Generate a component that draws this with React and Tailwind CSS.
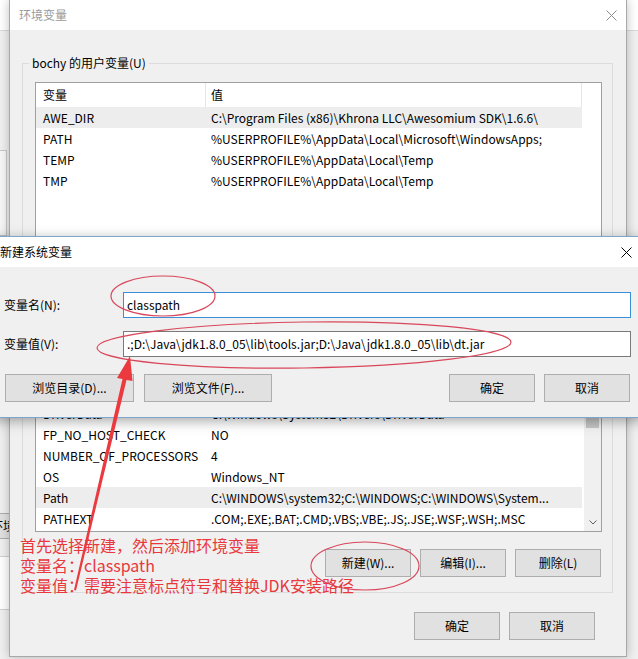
import React from "react";

const userVars = [
  ["AWE_DIR", "C:\\Program Files (x86)\\Khrona LLC\\Awesomium SDK\\1.6.6\\"],
  ["PATH", "%USERPROFILE%\\AppData\\Local\\Microsoft\\WindowsApps;"],
  ["TEMP", "%USERPROFILE%\\AppData\\Local\\Temp"],
  ["TMP", "%USERPROFILE%\\AppData\\Local\\Temp"],
];

const systemVars = [
  ["asl.log", "Destination=file"],
  ["ComSpec", "C:\\WINDOWS\\system32\\cmd.exe"],
  ["DriverData", "C:\\Windows\\System32\\Drivers\\DriverData"],
  ["FP_NO_HOST_CHECK", "NO"],
  ["NUMBER_OF_PROCESSORS", "4"],
  ["OS", "Windows_NT"],
  ["Path", "C:\\WINDOWS\\system32;C:\\WINDOWS;C:\\WINDOWS\\System..."],
  ["PATHEXT", ".COM;.EXE;.BAT;.CMD;.VBS;.VBE;.JS;.JSE;.WSF;.WSH;.MSC"],
];

function CloseIcon({ color }) {
  return (
    <svg width="11" height="11" viewBox="0 0 11 11">
      <path d="M0.5 0.5L10.5 10.5M10.5 0.5L0.5 10.5" stroke={color} strokeWidth="1" />
    </svg>
  );
}

function Btn({ children, className = "" }) {
  return (
    <div
      className={`flex items-center justify-center h-[28px] border border-[#adadad] bg-[#e1e1e1] text-[12px] text-black ${className}`}
    >
      {children}
    </div>
  );
}

function Row({ name, value, selected }) {
  return (
    <div className={`flex h-[21px] items-center w-[546px] ${selected ? "bg-[#ededed]" : ""}`}>
      <div className="w-[170px] pl-[7px] whitespace-nowrap overflow-hidden">{name}</div>
      <div className="w-[376px] pl-[5px] whitespace-nowrap overflow-hidden">{value}</div>
    </div>
  );
}

function Header() {
  return (
    <div className="flex h-[24px] items-center w-[546px]">
      <div className="w-[170px] h-full flex items-center pl-[7px] border-r border-[#e5e5e5]">变量</div>
      <div className="w-[376px] h-full flex items-center pl-[5px] border-r border-[#e5e5e5]">值</div>
    </div>
  );
}

function GroupBox({ label, className, children }) {
  return (
    <div className={`relative border border-[#dcdcdc] ${className}`}>
      <span className="absolute -top-[10px] left-[6px] px-[3px] bg-[#f0f0f0] text-[12px] leading-[18px] text-black">
        {label}
      </span>
      {children}
    </div>
  );
}

export default function App() {
  return (
    <div className="relative w-[638px] h-[659px] overflow-hidden bg-[#f0f0f0] font-['Noto_Sans_CJK_SC','Noto_Sans',sans-serif] text-[12px] text-black">
      {/* window behind */}
      <div className="h-[31px] bg-white border-b border-[#d9d9d9]"></div>
      <div className="absolute left-[-60px] top-[150px] w-[67px] h-[86px] border border-[#c8c8c8] bg-[#f7f7f7]"></div>
      <div className="absolute left-[-40px] top-[513px] w-[120px] h-[26px] border border-[#adadad] bg-[#e1e1e1] flex items-center pl-[30px]">
        环境变量(N)...
      </div>
      <div className="absolute left-[-60px] top-[556px] w-[80px] h-[54px] border border-[#d0d0d0] bg-white"></div>

      {/* 环境变量 dialog */}
      <div className="absolute left-[9px] top-0 w-[618px] h-[657px] flex flex-col bg-[#f0f0f0] border border-[#a8a8a8] border-t-0 shadow-[0_0_10px_rgba(0,0,0,0.25)]">
        <div className="h-[30px] shrink-0 bg-white flex items-center justify-between pl-[9px] pr-[9px]">
          <span className="text-[#9a9a9a]">环境变量</span>
          <CloseIcon color="#8a8a8a" />
        </div>

        <div className="flex flex-col pl-[12px]">
          <GroupBox label="bochy 的用户变量(U)" className="mt-[33px] w-[591px] h-[244px] pt-[18px] pl-[12px]">
            <div className="w-[567px] h-[190px] border border-[#a0a0a0] bg-white">
              <Header />
              {userVars.map((r, i) => (
                <Row key={r[0]} name={r[0]} value={r[1]} selected={i === 0} />
              ))}
            </div>
          </GroupBox>

          <GroupBox label="系统变量(S)" className="mt-[10px] w-[591px] h-[276px] pt-[18px] pl-[12px]">
            <div className="flex w-[567px] h-[196px] border border-[#a0a0a0] bg-white">
              <div className="flex-1 flex flex-col">
                <Header />
                {systemVars.map((r) => (
                  <Row key={r[0]} name={r[0]} value={r[1]} selected={r[0] === "Path"} />
                ))}
              </div>
              <div className="w-[17px] flex flex-col bg-[#f0f0f0]">
                <div className="h-[17px] flex items-center justify-center">
                  <svg width="8" height="5" viewBox="0 0 8 5">
                    <path d="M0.5 4.5L4 1L7.5 4.5" stroke="#606060" fill="none" />
                  </svg>
                </div>
                <div className="mx-[2px] h-[74px] bg-[#c6c6c6]"></div>
                <div className="flex-1"></div>
                <div className="h-[17px] flex items-center justify-center">
                  <svg width="8" height="5" viewBox="0 0 8 5">
                    <path d="M0.5 0.5L4 4L7.5 0.5" stroke="#606060" fill="none" />
                  </svg>
                </div>
              </div>
            </div>
            <div className="flex justify-end gap-[9px] w-[567px] mt-[17px] pr-[1px]">
              <Btn className="w-[86px]">新建(W)...</Btn>
              <Btn className="w-[86px]">编辑(I)...</Btn>
              <Btn className="w-[86px]">删除(L)</Btn>
            </div>
          </GroupBox>

          <div className="flex justify-end gap-[9px] w-[573px] mt-[19px]">
            <Btn className="w-[86px]">确定</Btn>
            <Btn className="w-[86px]">取消</Btn>
          </div>
        </div>
      </div>

      {/* 新建系统变量 dialog */}
      <div className="absolute left-[-8px] top-[236px] w-[651px] flex flex-col bg-[#f0f0f0] border border-[#7ea6cc] shadow-[0_3px_12px_rgba(0,0,0,0.35)]">
        <div className="h-[30px] bg-white flex items-center justify-between pl-[7px] pr-[10px]">
          <span>新建系统变量</span>
          <CloseIcon color="#000" />
        </div>
        <div className="flex flex-col px-[11px] pt-[25px] pb-[15px]">
          <div className="flex items-center">
            <div className="w-[119px]">变量名(N):</div>
            <div className="w-[508px] h-[26px] border border-[#3c8fd6] bg-white flex items-center pl-[3px]">classpath</div>
          </div>
          <div className="flex items-center mt-[13px]">
            <div className="w-[119px]">变量值(V):</div>
            <div className="w-[508px] h-[26px] border border-[#7a7a7a] bg-white flex items-center pl-[3px] whitespace-nowrap">
              .;D:\Java\jdk1.8.0_05\lib\tools.jar;D:\Java\jdk1.8.0_05\lib\dt.jar
            </div>
          </div>
          <div className="flex items-center mt-[17px]">
            <Btn className="w-[129px] ml-[1px]">浏览目录(D)...</Btn>
            <Btn className="w-[128px] ml-[10px]">浏览文件(F)...</Btn>
            <div className="flex-1"></div>
            <Btn className="w-[86px]">确定</Btn>
            <Btn className="w-[86px] ml-[9px] mr-[1px]">取消</Btn>
          </div>
        </div>
      </div>

      {/* annotation marks */}
      <svg className="absolute left-0 top-0 pointer-events-none" width="638" height="659" viewBox="0 0 638 659">
        <ellipse cx="163" cy="296" rx="52" ry="20" fill="none" stroke="#d9475a" strokeWidth="1.2" />
        <ellipse cx="304" cy="345" rx="207" ry="23" fill="none" stroke="#d9475a" strokeWidth="1.2" transform="rotate(-0.8 304 345)" />
        <ellipse cx="365" cy="566" rx="54" ry="24" fill="none" stroke="#d9475a" strokeWidth="1.2" />
        <polygon
          points="130,356 117,378 122.5,379 74,590 76,590.4 126.5,380 132.5,381"
          fill="#ea3a3f"
        />
      </svg>

      <div className="absolute left-[20px] top-[535px] text-[16px] leading-[20px] text-[#e8383d] whitespace-nowrap">
        <div>首先选择新建，然后添加环境变量</div>
        <div>变量名：classpath</div>
        <div>变量值：需要注意标点符号和替换JDK安装路径</div>
      </div>
    </div>
  );
}
